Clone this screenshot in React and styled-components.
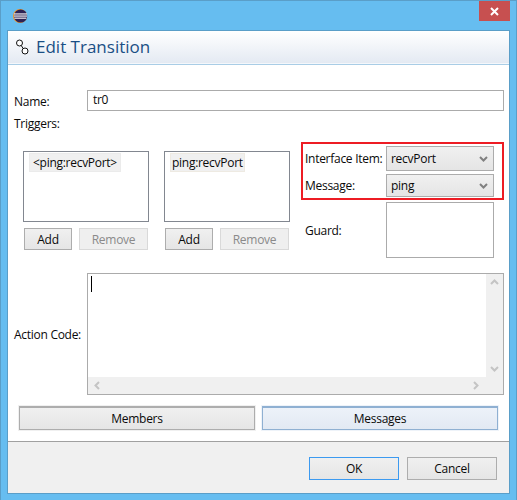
import React from 'react';
import styled, { createGlobalStyle } from 'styled-components';

const GlobalStyle = createGlobalStyle`
  html, body {
    margin: 0;
    padding: 0;
    background: #66bdf0;
  }
  * {
    box-sizing: border-box;
  }
`;

const Window = styled.div`
  width: 517px;
  height: 500px;
  display: flex;
  flex-direction: column;
  background: #66bdf0;
  border: 1px solid #5a9ec8;
  border-bottom: 0;
  font-family: 'Open Sans', 'Noto Sans', sans-serif;
  font-size: 12px;
  letter-spacing: -0.28px;
  color: #0a0a0a;
  white-space: nowrap;
`;

const TitleBar = styled.div`
  height: 29px;
  flex: none;
  display: flex;
  justify-content: space-between;
  padding-left: 11px;
`;

const AppIcon = styled.svg`
  width: 16px;
  height: 16px;
  margin-top: 7px;
`;

const CloseButton = styled.div`
  width: 31px;
  height: 20px;
  margin-right: 6px;
  background: #c75050;
  display: flex;
  align-items: center;
  justify-content: center;
`;

const Panel = styled.div`
  flex: 1;
  min-height: 0;
  margin: 0 6px 6px;
  background: #fff;
  border: 1px solid #5a9ec8;
  display: flex;
  flex-direction: column;
`;

const Header = styled.div`
  height: 34px;
  flex: none;
  display: flex;
  align-items: center;
  gap: 5px;
  padding: 0 0 2px 7px;
  background: linear-gradient(#fff, #e3e9f2);
  border-bottom: 1px solid #a9cde6;
  box-shadow: inset 0 -1px 0 #f4f7fb;
`;

const HeaderTitle = styled.h1`
  margin: 0;
  font-size: 17px;
  font-weight: 400;
  letter-spacing: 0;
  color: #1a4f85;
`;

const Form = styled.div`
  flex: none;
  display: flex;
  flex-direction: column;
  padding: 25px 5px 0 6px;
`;

const NameRow = styled.div`
  display: flex;
  align-items: center;
  height: 21px;
`;

const FieldLabel = styled.label`
  width: 73px;
  flex: none;
  padding-top: ${(p) => p.$nudge || 0}px;
`;

const TextField = styled.div`
  flex: 1;
  height: 21px;
  border: 1px solid #ababab;
  padding: 0 5px;
  line-height: 18px;
`;

const SectionLabel = styled.div`
  height: 16px;
  margin-top: 5px;
  line-height: 16px;
`;

const TriggerRow = styled.div`
  display: flex;
  height: 116px;
  margin-top: 10px;
  padding-left: 9px;
`;

const ListColumn = styled.div`
  width: 126px;
  margin-right: ${(p) => p.$gap}px;
  padding-top: 9px;
`;

const ListBox = styled.div`
  height: 71px;
  border: 1px solid #828790;
  padding: 1px 5px;
`;

const ListItem = styled.span`
  display: inline-block;
  height: 19px;
  line-height: 18px;
  padding: 0 ${(p) => (p.$warm ? 1 : 3)}px;
  background: #f0f0f0;
  border: 1px solid ${(p) => (p.$warm ? '#eeeae2' : '#ebebeb')};
`;

const ButtonRow = styled.div`
  display: flex;
  gap: 7px;
  margin-top: 6px;
  padding: 0 1px;
`;

const SmallButton = styled.button`
  width: ${(p) => p.$width}px;
  height: 22px;
  padding: 0;
  font: inherit;
  letter-spacing: inherit;
  color: ${(p) => (p.disabled ? '#8a8a8a' : '#0a0a0a')};
  border: 1px solid ${(p) => (p.disabled ? '#d9d9d9' : '#adadad')};
  background: ${(p) => (p.disabled ? '#efefef' : 'linear-gradient(#f0f0f0, #e5e5e5)')};
`;

const SideColumn = styled.div`
  width: 203px;
  display: flex;
  flex-direction: column;
`;

const Highlight = styled.div`
  height: 58px;
  border: 2px solid #ed1c24;
  padding: 2px 8px 0 2px;
  display: flex;
  flex-direction: column;
  gap: 3px;
`;

const ComboRow = styled.div`
  display: flex;
  align-items: center;
  height: ${(p) => p.$height}px;
`;

const ComboLabel = styled.span`
  width: 81px;
  flex: none;
`;

const Combo = styled.div`
  flex: 1;
  height: 100%;
  display: flex;
  align-items: center;
  justify-content: space-between;
  padding: 0 5px 0 4px;
  border: 1px solid #acacac;
  background: linear-gradient(#f0f0f0, #e5e5e5);
`;

const GuardRow = styled.div`
  display: flex;
  align-items: center;
  height: 56px;
  margin-top: 2px;
  padding-left: 4px;
`;

const GuardBox = styled.div`
  width: 108px;
  height: 56px;
  border: 1px solid #ababab;
`;

const ActionRow = styled.div`
  display: flex;
  align-items: center;
  height: 122px;
  margin-top: 15px;
`;

const CodeArea = styled.div`
  flex: 1;
  height: 100%;
  border: 1px solid #ababab;
  display: grid;
  grid-template-columns: 1fr 17px;
  grid-template-rows: 1fr 17px;
`;

const Editor = styled.div`
  padding: 2px 3px;
`;

const Caret = styled.div`
  width: 1px;
  height: 16px;
  background: #000;
`;

const VerticalBar = styled.div`
  background: #f0f0f0;
  display: flex;
  flex-direction: column;
  justify-content: space-between;
  align-items: center;
  padding: 4px 0 4px;
`;

const HorizontalBar = styled.div`
  grid-column: 1 / 3;
  background: #f0f0f0;
  display: flex;
  justify-content: space-between;
  align-items: center;
  padding: 0 23px 0 5px;
`;

const TabRow = styled.div`
  display: flex;
  gap: 7px;
  margin-top: 11px;
  padding: 0 5px 0 5px;
`;

const TabButton = styled.button`
  width: 236px;
  height: 24px;
  padding: 0;
  font: inherit;
  letter-spacing: inherit;
  color: #0a0a0a;
  border: 1px solid ${(p) => (p.$active ? '#8fb0d2' : '#adadad')};
  border-top-width: 2px;
  background: ${(p) => (p.$active ? 'linear-gradient(#edf2f9, #e2e9f3)' : 'linear-gradient(#f0f0f0, #e5e5e5)')};
  outline: 1px solid ${(p) => (p.$active ? '#eef3f9' : '#f0f0f0')};
`;

const Footer = styled.div`
  flex: 1;
  margin-top: 11px;
  background: #f0f0f0;
  border-top: 1px solid #a0a0a0;
  display: flex;
  justify-content: flex-end;
  gap: 8px;
  padding: 15px 12px 0 0;
`;

const DialogButton = styled.button`
  width: 90px;
  height: 23px;
  padding: 0;
  font: inherit;
  letter-spacing: inherit;
  color: #0a0a0a;
  border: 1px solid ${(p) => (p.$primary ? '#3c9af0' : '#adadad')};
  background: linear-gradient(#f0f0f0, #e5e5e5);
`;

function Chevron({ dir, color = '#c4c4c4' }) {
  const points = {
    up: '1,6 4.5,2.5 8,6',
    down: '1,3 4.5,6.5 8,3',
    left: '6,1 2.5,4.5 6,8',
    right: '3,1 6.5,4.5 3,8',
  }[dir];
  return (
    <svg width="9" height="9" viewBox="0 0 9 9">
      <polyline points={points} fill="none" stroke={color} strokeWidth="2" />
    </svg>
  );
}

function EclipseLogo() {
  return (
    <AppIcon viewBox="0 0 16 16">
      <circle cx="8" cy="8" r="7" fill="#f7941e" />
      <circle cx="8.6" cy="8" r="6.6" fill="#2c2255" />
      <rect x="2" y="5.4" width="13" height="1.1" fill="#fff" />
      <rect x="2" y="7.5" width="13" height="1.1" fill="#fff" />
      <rect x="2.4" y="9.6" width="12" height="1.1" fill="#fff" />
    </AppIcon>
  );
}

function TransitionIcon() {
  return (
    <svg width="16" height="16" viewBox="0 0 16 16">
      <circle cx="4.5" cy="4" r="3" fill="#fff" stroke="#111" />
      <circle cx="10" cy="12" r="3" fill="#fff" stroke="#111" />
      <line x1="6.2" y1="6.5" x2="8.2" y2="9.5" stroke="#111" />
    </svg>
  );
}

function TriggerList({ item, warm, gap }) {
  return (
    <ListColumn $gap={gap}>
      <ListBox>
        <ListItem $warm={warm}>{item}</ListItem>
      </ListBox>
      <ButtonRow>
        <SmallButton $width={48}>Add</SmallButton>
        <SmallButton $width={69} disabled>Remove</SmallButton>
      </ButtonRow>
    </ListColumn>
  );
}

export default function App() {
  return (
    <>
      <GlobalStyle />
      <Window>
        <TitleBar>
          <EclipseLogo />
          <CloseButton>
            <svg width="9" height="9" viewBox="0 0 9 9">
              <path d="M1 1 L8 8 M8 1 L1 8" stroke="#fff" strokeWidth="2" />
            </svg>
          </CloseButton>
        </TitleBar>
        <Panel>
          <Header>
            <TransitionIcon />
            <HeaderTitle>Edit Transition</HeaderTitle>
          </Header>
          <Form>
            <NameRow>
              <FieldLabel $nudge={2}>Name:</FieldLabel>
              <TextField>tr0</TextField>
            </NameRow>
            <SectionLabel>Triggers:</SectionLabel>
            <TriggerRow>
              <TriggerList item="<ping:recvPort>" gap={15} />
              <TriggerList item="ping:recvPort" warm gap={11} />
              <SideColumn>
                <Highlight>
                  <ComboRow $height={25}>
                    <ComboLabel>Interface Item:</ComboLabel>
                    <Combo>recvPort<Chevron dir="down" color="#808080" /></Combo>
                  </ComboRow>
                  <ComboRow $height={23}>
                    <ComboLabel>Message:</ComboLabel>
                    <Combo>ping<Chevron dir="down" color="#808080" /></Combo>
                  </ComboRow>
                </Highlight>
                <GuardRow>
                  <ComboLabel>Guard:</ComboLabel>
                  <GuardBox />
                </GuardRow>
              </SideColumn>
            </TriggerRow>
            <ActionRow>
              <FieldLabel>Action Code:</FieldLabel>
              <CodeArea>
                <Editor><Caret /></Editor>
                <VerticalBar>
                  <Chevron dir="up" />
                  <Chevron dir="down" />
                </VerticalBar>
                <HorizontalBar>
                  <Chevron dir="left" />
                  <Chevron dir="right" />
                </HorizontalBar>
              </CodeArea>
            </ActionRow>
            <TabRow>
              <TabButton>Members</TabButton>
              <TabButton $active>Messages</TabButton>
            </TabRow>
          </Form>
          <Footer>
            <DialogButton $primary>OK</DialogButton>
            <DialogButton>Cancel</DialogButton>
          </Footer>
        </Panel>
      </Window>
    </>
  );
}
